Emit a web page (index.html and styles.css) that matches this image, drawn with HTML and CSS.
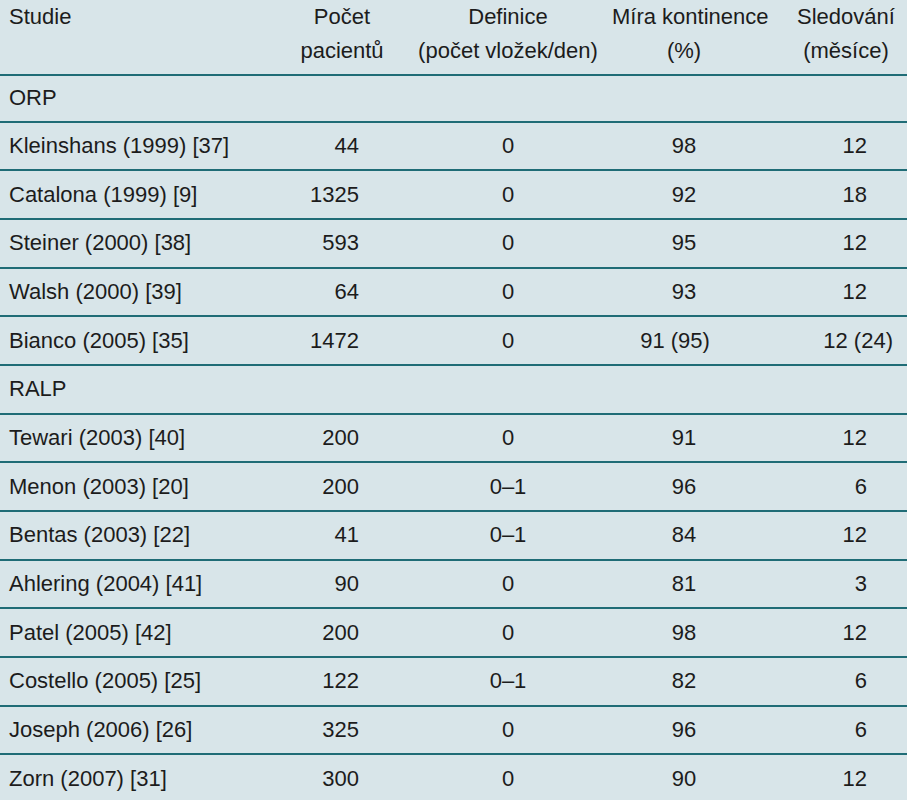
FILE: index.html
```html
<!DOCTYPE html>
<html lang="cs">
<head>
<meta charset="utf-8">
<title>Kontinence</title>
<link rel="stylesheet" href="styles.css">
</head>
<body>
<table class="tbl">
  <colgroup>
    <col class="w1"><col class="w2"><col class="w3"><col class="w4"><col class="w5">
  </colgroup>
  <thead>
    <tr>
      <th class="c1">Studie</th>
      <th class="c2">Počet<br>pacientů</th>
      <th class="c3">Definice<br>(počet vložek/den)</th>
      <th class="c4">Míra kontinence<br>(%)</th>
      <th class="c5">Sledování<br>(měsíce)</th>
    </tr>
  </thead>
  <tbody>
    <tr class="group first"><td class="c1" colspan="5">ORP</td></tr>
    <tr><td class="c1">Kleinshans (1999) [37]</td><td class="c2">44</td><td class="c3">0</td><td class="c4">98</td><td class="c5">12</td></tr>
    <tr><td class="c1">Catalona (1999) [9]</td><td class="c2">1325</td><td class="c3">0</td><td class="c4">92</td><td class="c5">18</td></tr>
    <tr><td class="c1">Steiner (2000) [38]</td><td class="c2">593</td><td class="c3">0</td><td class="c4">95</td><td class="c5">12</td></tr>
    <tr><td class="c1">Walsh (2000) [39]</td><td class="c2">64</td><td class="c3">0</td><td class="c4">93</td><td class="c5">12</td></tr>
    <tr><td class="c1">Bianco (2005) [35]</td><td class="c2">1472</td><td class="c3">0</td><td class="c4 wide">91 (95)</td><td class="c5">12<span class="extra"> (24)</span></td></tr>
    <tr class="group"><td class="c1" colspan="5">RALP</td></tr>
    <tr><td class="c1">Tewari (2003) [40]</td><td class="c2">200</td><td class="c3">0</td><td class="c4">91</td><td class="c5">12</td></tr>
    <tr><td class="c1">Menon (2003) [20]</td><td class="c2">200</td><td class="c3">0–1</td><td class="c4">96</td><td class="c5">6</td></tr>
    <tr><td class="c1">Bentas (2003) [22]</td><td class="c2">41</td><td class="c3">0–1</td><td class="c4">84</td><td class="c5">12</td></tr>
    <tr><td class="c1">Ahlering (2004) [41]</td><td class="c2">90</td><td class="c3">0</td><td class="c4">81</td><td class="c5">3</td></tr>
    <tr><td class="c1">Patel (2005) [42]</td><td class="c2">200</td><td class="c3">0</td><td class="c4">98</td><td class="c5">12</td></tr>
    <tr><td class="c1">Costello (2005) [25]</td><td class="c2">122</td><td class="c3">0–1</td><td class="c4">82</td><td class="c5">6</td></tr>
    <tr><td class="c1">Joseph (2006) [26]</td><td class="c2">325</td><td class="c3">0</td><td class="c4">96</td><td class="c5">6</td></tr>
    <tr class="last"><td class="c1">Zorn (2007) [31]</td><td class="c2">300</td><td class="c3">0</td><td class="c4">90</td><td class="c5">12</td></tr>
  </tbody>
</table>
</body>
</html>
```
FILE: styles.css
```css
html, body {
  margin: 0;
  padding: 0;
  background: #d8e5e9;
}
body {
  width: 907px;
  height: 800px;
  overflow: hidden;
  font-family: "Liberation Sans", Arial, sans-serif;
  font-size: 22px;
  color: #1c1c1c;
}
.tbl {
  width: 907px;
  table-layout: fixed;
  border-collapse: collapse;
  border-spacing: 0;
}
.w1 { width: 280px; }
.w2 { width: 124px; }
.w3 { width: 208px; }
.w4 { width: 144px; }
.w5 { width: 151px; }

.tbl th {
  font-weight: normal;
  line-height: 34px;
  padding: 0 0 6px 0;
  vertical-align: top;
  white-space: nowrap;
  text-align: center;
  border-bottom: 2px solid #1f6c76;
}
.tbl th.c1 { text-align: left; padding-left: 9px; }
.tbl th.c5 { padding-left: 29px; }

.tbl td {
  height: 46.7px;
  padding: 0;
  line-height: 24px;
  white-space: nowrap;
  vertical-align: middle;
  border-bottom: 2px solid #1f6c76;
}
.tbl tr.first td { height: 44.5px; }
.tbl tr.last td { border-bottom: none; }
.tbl td.c1 { padding-left: 9px; text-align: left; }
.tbl td.c2 { text-align: right; padding-right: 45px; }
.tbl td.c3 { text-align: center; }
.tbl td.c4 { text-align: center; }
.tbl td.c4.wide { padding-right: 18px; }
.tbl td.c5 { text-align: right; padding-right: 40px; }
.extra { margin-right: -26px; }
```
